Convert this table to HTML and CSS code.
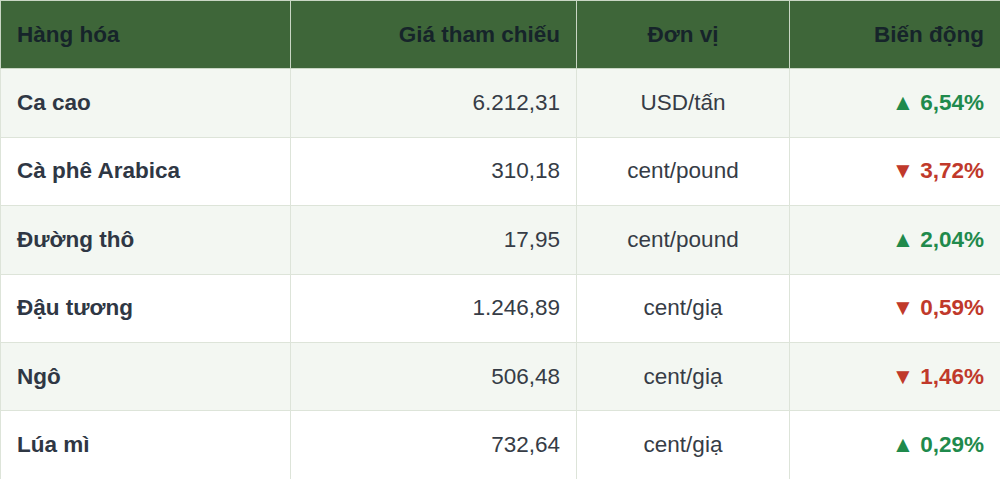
FILE: index.html
```html
<!DOCTYPE html>
<html lang="vi">
<head>
<meta charset="utf-8">
<link rel="stylesheet" href="styles.css">
<title>Giá hàng hóa</title>
</head>
<body>
<table class="prices">
  <colgroup>
    <col class="c1"><col class="c2"><col class="c3"><col class="c4">
  </colgroup>
  <thead>
    <tr>
      <th class="left">Hàng hóa</th>
      <th class="right">Giá tham chiếu</th>
      <th class="center">Đơn vị</th>
      <th class="right">Biến động</th>
    </tr>
  </thead>
  <tbody>
    <tr>
      <td class="name">Ca cao</td>
      <td class="right">6.212,31</td>
      <td class="center">USD/tấn</td>
      <td class="right up">▲ 6,54%</td>
    </tr>
    <tr>
      <td class="name">Cà phê Arabica</td>
      <td class="right">310,18</td>
      <td class="center">cent/pound</td>
      <td class="right down">▼ 3,72%</td>
    </tr>
    <tr>
      <td class="name">Đường thô</td>
      <td class="right">17,95</td>
      <td class="center">cent/pound</td>
      <td class="right up">▲ 2,04%</td>
    </tr>
    <tr>
      <td class="name">Đậu tương</td>
      <td class="right">1.246,89</td>
      <td class="center">cent/giạ</td>
      <td class="right down">▼ 0,59%</td>
    </tr>
    <tr>
      <td class="name">Ngô</td>
      <td class="right">506,48</td>
      <td class="center">cent/giạ</td>
      <td class="right down">▼ 1,46%</td>
    </tr>
    <tr>
      <td class="name">Lúa mì</td>
      <td class="right">732,64</td>
      <td class="center">cent/giạ</td>
      <td class="right up">▲ 0,29%</td>
    </tr>
  </tbody>
</table>
</body>
</html>
```
FILE: styles.css
```css
html, body {
  margin: 0;
  padding: 0;
  background: #ffffff;
}
body {
  font-family: "Liberation Sans", Arial, sans-serif;
  font-size: 22.5px;
  color: #363c46;
}
.prices {
  width: 1000px;
  border-collapse: collapse;
  table-layout: fixed;
  border: 1px solid #d9e0d5;
}
.prices tr {
  height: 68.4px;
}
.c1 { width: 290px; }
.c2 { width: 286px; }
.c3 { width: 213px; }
.c4 { width: 211px; }
.prices th,
.prices td {
  border: 1px solid #dde4d9;
  padding: 0 16px;
  vertical-align: middle;
  white-space: nowrap;
}
.prices th {
  background: #3e6639;
  color: #16242a;
  font-weight: bold;
  border-color: #c9d6c4;
}
.prices tbody tr:nth-child(odd) td {
  background: #f3f7f2;
}
.prices tbody tr:nth-child(even) td {
  background: #ffffff;
}
.left { text-align: left; }
.right { text-align: right; }
.center { text-align: center; }
.name {
  font-weight: bold;
  color: #2f3744;
}
.up {
  color: #1f8a4c;
  font-weight: bold;
}
.down {
  color: #c0392b;
  font-weight: bold;
}
```
